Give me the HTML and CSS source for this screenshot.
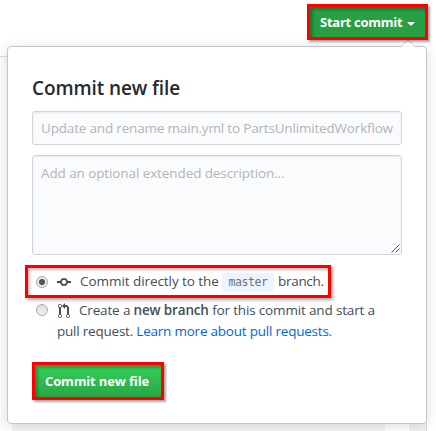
FILE: index.html
```html
<!DOCTYPE html>
<html lang="en">
<head>
<meta charset="utf-8">
<title>Commit new file</title>
<link rel="stylesheet" href="styles.css">
</head>
<body>
<div class="page">
  <div class="page-rule"></div>
  <div class="page-footer"><div class="editor-edge"></div><div class="gutter"></div><div class="scroll-edge"></div></div>
  <header class="toolbar">
    <button class="btn btn-start" type="button"><span class="start-label">Start commit</span><i class="caret"></i></button>
  </header>
  <form class="panel">
    <svg class="pointer" width="16" height="8" viewBox="0 0 16 8"><path d="M1 7.5 8 .7l7 6.8" fill="#fff" stroke="#c9cacd"/><path d="M1.5 8h13" stroke="#fff"/></svg>
    <h1 class="title"><span>Commit new file</span></h1>
    <input class="field summary" type="text" placeholder="Update and rename main.yml to PartsUnlimitedWorkflow">
    <div class="description-wrap">
      <textarea class="field description" placeholder="Add an optional extended description..."></textarea>
      <svg class="grip" width="9" height="9" viewBox="0 0 9 9"><path d="M.5 8.5l8-8M4.500 8.500l4-4" stroke="#555" fill="none"/></svg>
    </div>
    <label class="choice choice-direct">
      <span class="radio checked"></span>
      <svg class="icon-commit" width="14" height="16" viewBox="0 0 14 16"><path fill="#444d56" fill-rule="evenodd" d="M10.860 7c-.45-1.720-2-3-3.860-3-1.860 0-3.410 1.280-3.860 3H0v2h3.140c.45 1.720 2 3 3.860 3 1.860 0 3.410-1.280 3.860-3H14V7h-3.140zM7 10.200c-1.220 0-2.200-.98-2.200-2.200 0-1.220.98-2.200 2.200-2.200 1.220 0 2.200.98 2.200 2.200 0 1.220-.98 2.200-2.200 2.200z"/></svg>
      <span class="t-direct">Commit directly to the</span>
      <code>master</code>
      <span class="t-branch">branch.</span>
    </label>
    <div class="choice choice-new">
      <span class="radio"></span>
      <div class="lines">
        <div class="line">
          <svg class="icon-pr" width="12" height="16" viewBox="0 0 12 16"><path fill="#444d56" fill-rule="evenodd" d="M11 11.280V5c-.03-.78-.34-1.470-.94-2.060C9.460 2.350 8.780 2.030 8 2H7V0L4 3l3 3V4h1c.27.02.48.11.69.31.21.2.3.42.31.69v6.280A1.993 1.993 0 0 0 10 15a1.993 1.993 0 0 0 1-3.720zm-1 2.920c-.66 0-1.200-.55-1.200-1.200 0-.65.55-1.200 1.200-1.200.65 0 1.200.55 1.200 1.200 0 .65-.55 1.200-1.200 1.200zM4 3c0-1.110-.89-2-2-2a1.993 1.993 0 0 0-1 3.720v6.560A1.993 1.993 0 0 0 2 15a1.993 1.993 0 0 0 1-3.720V4.720c.59-.34 1-.98 1-1.720zm-.8 10c0 .66-.55 1.200-1.200 1.200-.65 0-1.200-.55-1.200-1.200 0-.65.55-1.200 1.200-1.200.65 0 1.200.55 1.200 1.200zM2 4.200C1.340 4.200.8 3.650.8 3c0-.65.55-1.200 1.200-1.200.65 0 1.200.55 1.200 1.200 0 .65-.55 1.200-1.200 1.200z"/></svg>
          <span class="t-create">Create a <b>new branch</b> for this commit and start a</span>
        </div>
        <div class="line"><span class="t-pull">pull request. <a>Learn more about pull requests.</a></span></div>
      </div>
    </div>
    <button class="btn btn-commit" type="button"><span class="commit-label">Commit new file</span></button>
  </form>
</div>
</body>
</html>
```
FILE: styles.css
```css
* { box-sizing: border-box; }
body { margin: 0; background: #fff; color: #444d56; font: 13.5px/21px "Open Sans", "Noto Sans", sans-serif; }
.page { position: relative; width: 436px; height: 431px; overflow: hidden; }
.page-rule { position: absolute; top: 56px; left: 0; width: 7px; height: 375px; border-top: 1px solid #dcdddf; background: #fcfcfc; }
.page-footer { position: absolute; left: 12px; bottom: 0; display: flex; width: 415px; height: 12px; }
.editor-edge { width: 373px; background: #f2f4f7; }
.gutter { width: 24px; background: #fff; }
.scroll-edge { width: 18px; background: #f1f1f1; border-right: 1px solid #dcdce4; }
.toolbar { display: flex; height: 46px; padding: 4px 8px 0 0; justify-content: flex-end; }
.btn { display: flex; align-items: center; margin: 0; border: 3px solid #f00; color: #fff; font: 700 13px/20px "Open Sans", sans-serif; white-space: nowrap; box-shadow: 2px 2px 2px rgba(0,0,0,.35), inset 3px 3px 3px rgba(0,0,0,.25); }
.btn-start { position: relative; z-index: 2; width: 121px; height: 36px; padding: 0 0 0 10px; background: #279f43; }
.start-label { letter-spacing: -.25px; }
.caret { margin-left: 5px; margin-top: 3px; border: 4px solid transparent; border-top-color: #fff; border-bottom: 0; }
.panel { position: relative; width: 420px; height: 378px; margin-left: 7px; padding: 28px 24px 0; border: 1px solid #c5c6c9; border-radius: 4px; background: #fff; box-shadow: 0 2px 12px rgba(27,31,35,.15); }
.pointer { position: absolute; top: -8px; right: 10px; }
.title { height: 36px; margin: 0; color: #24292e; font: 600 19px/26px "Open Sans", sans-serif; white-space: nowrap; }
.title span { letter-spacing: -.1px; }
.field { display: block; width: 370px; margin: 0; border: 1px solid #d1d5da; border-radius: 3px; outline: 0; background: #fafbfc; box-shadow: inset 0 1px 2px rgba(27,31,35,.075); font: 13.5px/20px "Open Sans", sans-serif; resize: none; }
.field::placeholder { color: #b1b5ba; opacity: 1; }
.summary { height: 34px; padding: 0 8px; letter-spacing: -.18px; }
.description-wrap { position: relative; margin-top: 10px; }
.description { height: 100px; padding: 7px 8px; letter-spacing: -.1px; }
.grip { position: absolute; right: 2px; bottom: 2px; }
.choice { display: flex; white-space: nowrap; }
.choice-direct { align-items: center; width: 306px; height: 33px; margin: 10px 0 0 -7px; padding-left: 8px; border: 3px solid #f00; box-shadow: 2px 2px 3px rgba(0,0,0,.35), inset 2px 2px 3px rgba(0,0,0,.25); }
.radio { flex: none; width: 12px; height: 12px; border: 1px solid #aaa; border-radius: 50%; background: linear-gradient(#ddd, #f0f0f0); }
.radio.checked { background: radial-gradient(circle, #555 0 2.7px, #e9e9e9 3.4px); }
.icon-commit { flex: none; margin: 1px 9px 0; }
.t-direct { width: 142px; letter-spacing: -.06px; }
code { width: 52px; height: 18px; border-radius: 3px; background: #eaf5ff; color: #6a737d; font: 11.5px/18px "DejaVu Sans Mono", monospace; text-align: center; letter-spacing: -.4px; }
.t-branch { margin-left: 4px; letter-spacing: -.3px; }
.choice-new { margin: 2px 0 0 4px; }
.choice-new .radio { margin-top: 4px; }
.lines { margin-left: 9px; }
.line { display: flex; height: 21px; }
.icon-pr { flex: none; margin: 3px 9px 0 1px; }
.t-create { letter-spacing: -.16px; }
.t-pull { letter-spacing: -.22px; }
a { color: #0366d6; }
b { font-weight: 600; }
.btn-commit { width: 132px; height: 38px; margin-top: 20px; padding: 0 0 0 10px; background: linear-gradient(#34d058, #28a745); }
.commit-label { letter-spacing: -.15px; }
```
